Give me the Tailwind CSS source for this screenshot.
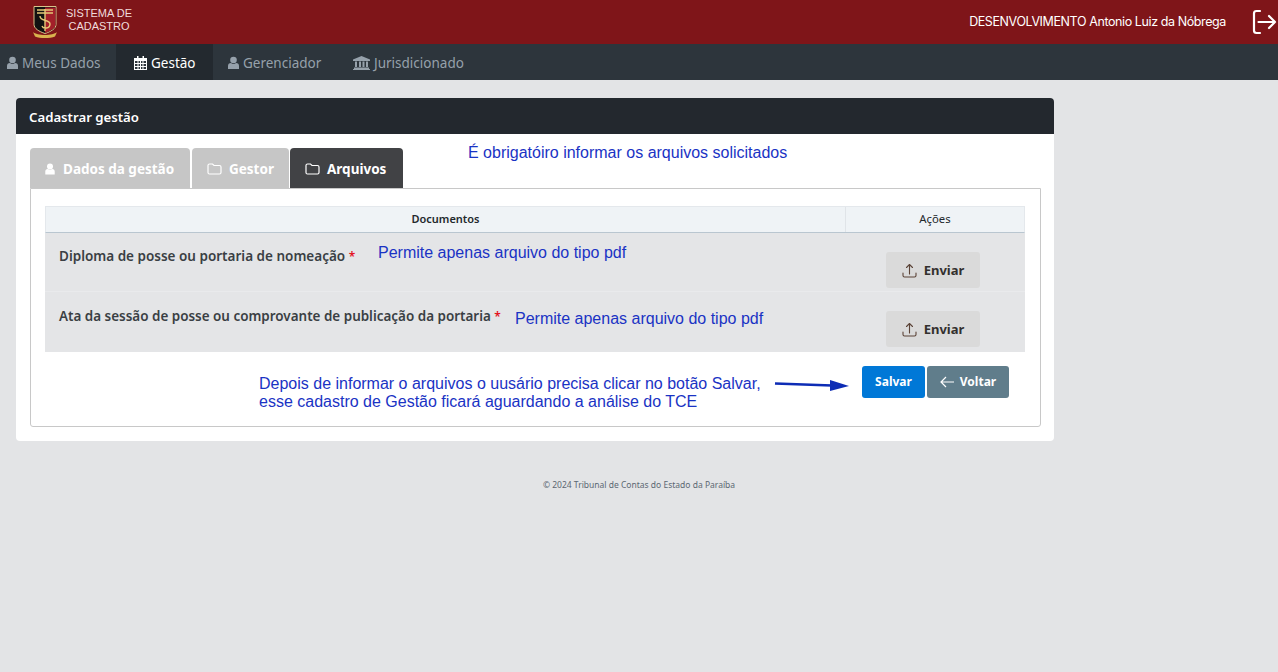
<!DOCTYPE html>
<html lang="pt-BR">
<head>
  <meta charset="UTF-8" />
  <title>Cadastrar gestão</title>
  <script src="https://cdn.jsdelivr.net/npm/@tailwindcss/browser@4"></script>
</head>
<body class="relative h-[672px] overflow-hidden bg-[#e3e4e6] font-['Noto_Sans',sans-serif] text-[#23282c]">
  <!-- Header -->
  <header class="flex h-[44px] items-center justify-between bg-[#7f1519] text-white">
    <div class="flex items-start pl-[32px]">
      <svg class="h-[34px] w-[26px]" viewBox="0 0 26 34">
        <path d="M2 1.500h22v18c0 4-5 7-11 9-6-2-11-5-11-9z" fill="#111" stroke="#d8c48a" stroke-width="1"/>
        <path d="M13 2.500h10.500v17c0 3.500-4.500 6.500-10.500 8.500z" fill="#a3202a"/>
        <path d="M5 5h16M5 8h16M13 4v22M8 11c0 6 10 3 10 8s-7 5-8 2" fill="none" stroke="#e6c877" stroke-width="1.400"/>
        <path d="M1 27c4 4 20 4 24 0l-2 4.500c-5 2-15 2-20 0z" fill="#d9b24e"/>
      </svg>
      <div class="ml-[6px] mt-[2px] w-[70px] text-center font-['Liberation_Sans',sans-serif] text-[11px] leading-[12.500px] text-[#f0dcdc]">SISTEMA DE<br>CADASTRO</div>
    </div>
    <div class="flex items-center">
      <span class="font-['Inter',sans-serif] text-[12.500px] tracking-[-0.4px]">DESENVOLVIMENTO Antonio Luiz da Nóbrega</span>
      <svg class="ml-[26px] mr-[1px] h-[26px] w-[25px]" viewBox="0 0 25 26" fill="none" stroke="white" stroke-width="2.200" stroke-linecap="round" stroke-linejoin="round">
        <path d="M8 2H4.500Q2 2 2 4.500v17Q2 24 4.500 24H8M6.500 13H23M17 7l6 6-6 6"/>
      </svg>
    </div>
  </header>

  <!-- Menu -->
  <nav class="flex h-[36px] items-center bg-[#2d353c] text-[13.500px] text-[#96a1ab]">
    <a class="flex h-full w-[116px] items-center gap-[4px] pl-[7px] pt-[2px]">
      <svg class="h-[14px] w-[11px] fill-[#96a1ab]" viewBox="0 0 11 14"><circle cx="5.500" cy="4" r="3.300"/><path d="M0 13v-3c0-2 1-3 3-3 1.500 1.200 3.500 1.200 5 0 2 0 3 1 3 3v3z"/></svg>
      Meus Dados
    </a>
    <a class="flex h-full w-[97px] items-center gap-[4px] bg-[#23292f] pl-[18px] pt-[2px] text-white">
      <svg class="h-[14px] w-[13px] fill-white" viewBox="0 0 13 14"><path d="M0 2h13v12H0z"/><path d="M3 0h1.500v3H3zM8.500 0H10v3H8.500z"/><path d="M1 5h2.500v2H1zm3.500 0H6v2H4.500zm2.500 0h1.500v2H7zm2.500 0H12v2H9.500zM1 8h2.500v2H1zm3.500 0H6v2H4.500zM7 8h1.500v2H7zm2.500 0H12v2H9.500zM1 11h2.500v2H1zm3.500 0H6v2H4.500zM7 11h1.500v2H7zm2.500 0H12v2H9.500z" fill="#2d353c"/></svg>
      Gestão
    </a>
    <a class="flex h-full w-[125px] items-center gap-[4px] pl-[15px] pt-[2px]">
      <svg class="h-[14px] w-[11px] fill-[#96a1ab]" viewBox="0 0 11 14"><circle cx="5.500" cy="4" r="3.300"/><path d="M0 13v-3c0-2 1-3 3-3 1.500 1.200 3.500 1.200 5 0 2 0 3 1 3 3v3z"/></svg>
      Gerenciador
    </a>
    <a class="flex h-full items-center gap-[4px] pl-[15px] pt-[2px]">
      <svg class="h-[14px] w-[17px] fill-[#96a1ab]" viewBox="0 0 17 14"><path d="M8.500 0L17 3.500V5H0V3.500z"/><path d="M2 5.500h2v5.500H2zm4 0h2v5.500H6zm3.500 0h2v5.500h-2zm3.500 0h2v5.500h-2zM1 11.500h15V13H1zM0 13h17v1H0z"/></svg>
      Jurisdicionado
    </a>
  </nav>

  <!-- Main -->
  <main class="pl-[16px] pt-[18px]">
    <section class="w-[1038px] overflow-hidden rounded-[4px] bg-white">
      <h1 class="flex h-[36px] items-center bg-[#23282e] pl-[13px] pt-[4px] text-[13.200px] font-semibold text-white">Cadastrar gestão</h1>
      <div class="px-[14px] pb-[14px] pt-[14px]">
        <!-- Tabs -->
        <div class="flex h-[40px] text-[13.500px] font-bold text-white">
          <div class="flex w-[160px] items-center gap-[8px] rounded-t-[4px] bg-[#c6c6c6] pl-[15px] pt-[2px]">
            <svg class="h-[12px] w-[10px] fill-white" viewBox="0 0 11 14"><circle cx="5.500" cy="4" r="3.500"/><path d="M0 13.500v-3.500c0-2 1-3 3-3 1.500 1.200 3.500 1.200 5 0 2 0 3 1 3 3v3.500z"/></svg>
            Dados da gestão
          </div>
          <div class="ml-[2px] flex w-[97px] items-center gap-[7px] rounded-t-[4px] bg-[#c6c6c6] pl-[15px] pt-[2px]">
            <svg class="h-[12px] w-[15px]" viewBox="0 0 15 12" fill="none" stroke="white" stroke-width="1.200"><path d="M1 2.500C1 1.500 1.500 1 2.500 1h3L7 2.500h5.500c1 0 1.500.5 1.500 1.500v5.500c0 1-.5 1.500-1.500 1.500h-10C1.500 11 1 10.500 1 9.500z"/></svg>
            Gestor
          </div>
          <div class="ml-[1px] flex w-[113px] items-center gap-[7px] rounded-t-[4px] bg-[#414245] pl-[15px] pt-[2px]">
            <svg class="h-[12px] w-[15px]" viewBox="0 0 15 12" fill="none" stroke="white" stroke-width="1.200"><path d="M1 2.500C1 1.500 1.500 1 2.500 1h3L7 2.500h5.500c1 0 1.500.5 1.500 1.500v5.500c0 1-.5 1.500-1.500 1.500h-10C1.500 11 1 10.500 1 9.500z"/></svg>
            Arquivos
          </div>
        </div>

        <!-- Tab content -->
        <div class="h-[239px] w-[1011px] rounded-b-[3px] border border-[#c8c8c8] px-[14px] pt-[17px]">
          <div class="w-[980px] text-[11px] font-semibold">
            <div class="flex h-[27px] border border-[#e4e8ec] border-b-[#b9c6d0] bg-[#eff3f6]">
              <div class="flex w-[800px] items-center justify-center border-r border-[#e0e4e8]">Documentos</div>
              <div class="flex flex-1 items-center justify-center text-[11.300px] font-normal">Ações</div>
            </div>
            <div class="flex h-[59px] border-b border-[#e9eaec] bg-[#e4e5e7]">
              <div class="w-[841px] pl-[14px] pt-[14px] text-[13.500px] font-semibold leading-[18px] text-[#3a3f44]">Diploma de posse ou portaria de nomeação <span class="text-[12px] text-[#e3131f]">*</span></div>
              <div class="pt-[19px]">
                <button class="flex h-[36px] w-[94px] items-center justify-center gap-[7px] rounded-[3px] bg-[#dadada] pt-[2px] text-[13px] font-bold text-[#33302e]">
                  <svg class="h-[15px] w-[15px] -translate-y-[1px]" viewBox="0 0 15 15" fill="none" stroke="#5b4337" stroke-width="1.100" stroke-linecap="round" stroke-linejoin="round"><path d="M7.500 11V1.500M4.500 4.500l3-3 3 3M1 10v2.500c0 1 .5 1.500 1.500 1.500h10c1 0 1.500-.5 1.500-1.500V10"/></svg>
                  Enviar
                </button>
              </div>
            </div>
            <div class="flex h-[60px] bg-[#e4e5e7]">
              <div class="w-[841px] pl-[14px] pt-[15px] text-[13.450px] font-semibold leading-[18px] text-[#3a3f44]">Ata da sessão de posse ou comprovante de publicação da portaria <span class="text-[12px] text-[#e3131f]">*</span></div>
              <div class="pt-[19px]">
                <button class="flex h-[36px] w-[94px] items-center justify-center gap-[7px] rounded-[3px] bg-[#dadada] pt-[2px] text-[13px] font-bold text-[#33302e]">
                  <svg class="h-[15px] w-[15px] -translate-y-[1px]" viewBox="0 0 15 15" fill="none" stroke="#5b4337" stroke-width="1.100" stroke-linecap="round" stroke-linejoin="round"><path d="M7.500 11V1.500M4.500 4.500l3-3 3 3M1 10v2.500c0 1 .5 1.500 1.500 1.500h10c1 0 1.500-.5 1.500-1.500V10"/></svg>
                  Enviar
                </button>
              </div>
            </div>
          </div>
          <div class="ml-[817px] mt-[14px] flex text-[12px] font-bold text-white">
            <button class="h-[32px] w-[63px] rounded-[3px] bg-[#0078d7]">Salvar</button>
            <button class="ml-[2px] flex h-[32px] w-[82px] items-center justify-center gap-[6px] rounded-[3px] bg-[#607d8b]">
              <svg class="h-[12px] w-[14px]" viewBox="0 0 14 12" fill="none" stroke="white" stroke-width="1.200"><path d="M14 6H1M6 1L1 6l5 5"/></svg>
              Voltar
            </button>
          </div>
        </div>
      </div>
    </section>
    <p class="mt-[38px] w-[1246px] text-center text-[8.500px] text-[#5c6873]">© 2024 Tribunal de Contas do Estado da Paraíba</p>
  </main>

  <!-- Anotações sobre a tela -->
  <div class="font-['Liberation_Sans',sans-serif] text-[16px] leading-[18px] text-[#1a33c4]">
    <p class="absolute left-[468px] top-[144px]">É obrigatóiro informar os arquivos solicitados</p>
    <p class="absolute left-[378px] top-[244px]">Permite apenas arquivo do tipo pdf</p>
    <p class="absolute left-[515px] top-[310px]">Permite apenas arquivo do tipo pdf</p>
    <p class="absolute left-[259px] top-[375px]">Depois de informar o arquivos o uusário precisa clicar no botão Salvar,<br>esse cadastro de Gestão ficará aguardando a análise do TCE</p>
    <svg class="absolute left-[774px] top-[378px] h-[14px] w-[76px]" viewBox="0 0 76 14"><path d="M1 5.500L58 7.500" stroke="#0d2cb5" stroke-width="2.500"/><path d="M56 2l19 6-19 5z" fill="#0d2cb5"/></svg>
  </div>
</body>
</html>
